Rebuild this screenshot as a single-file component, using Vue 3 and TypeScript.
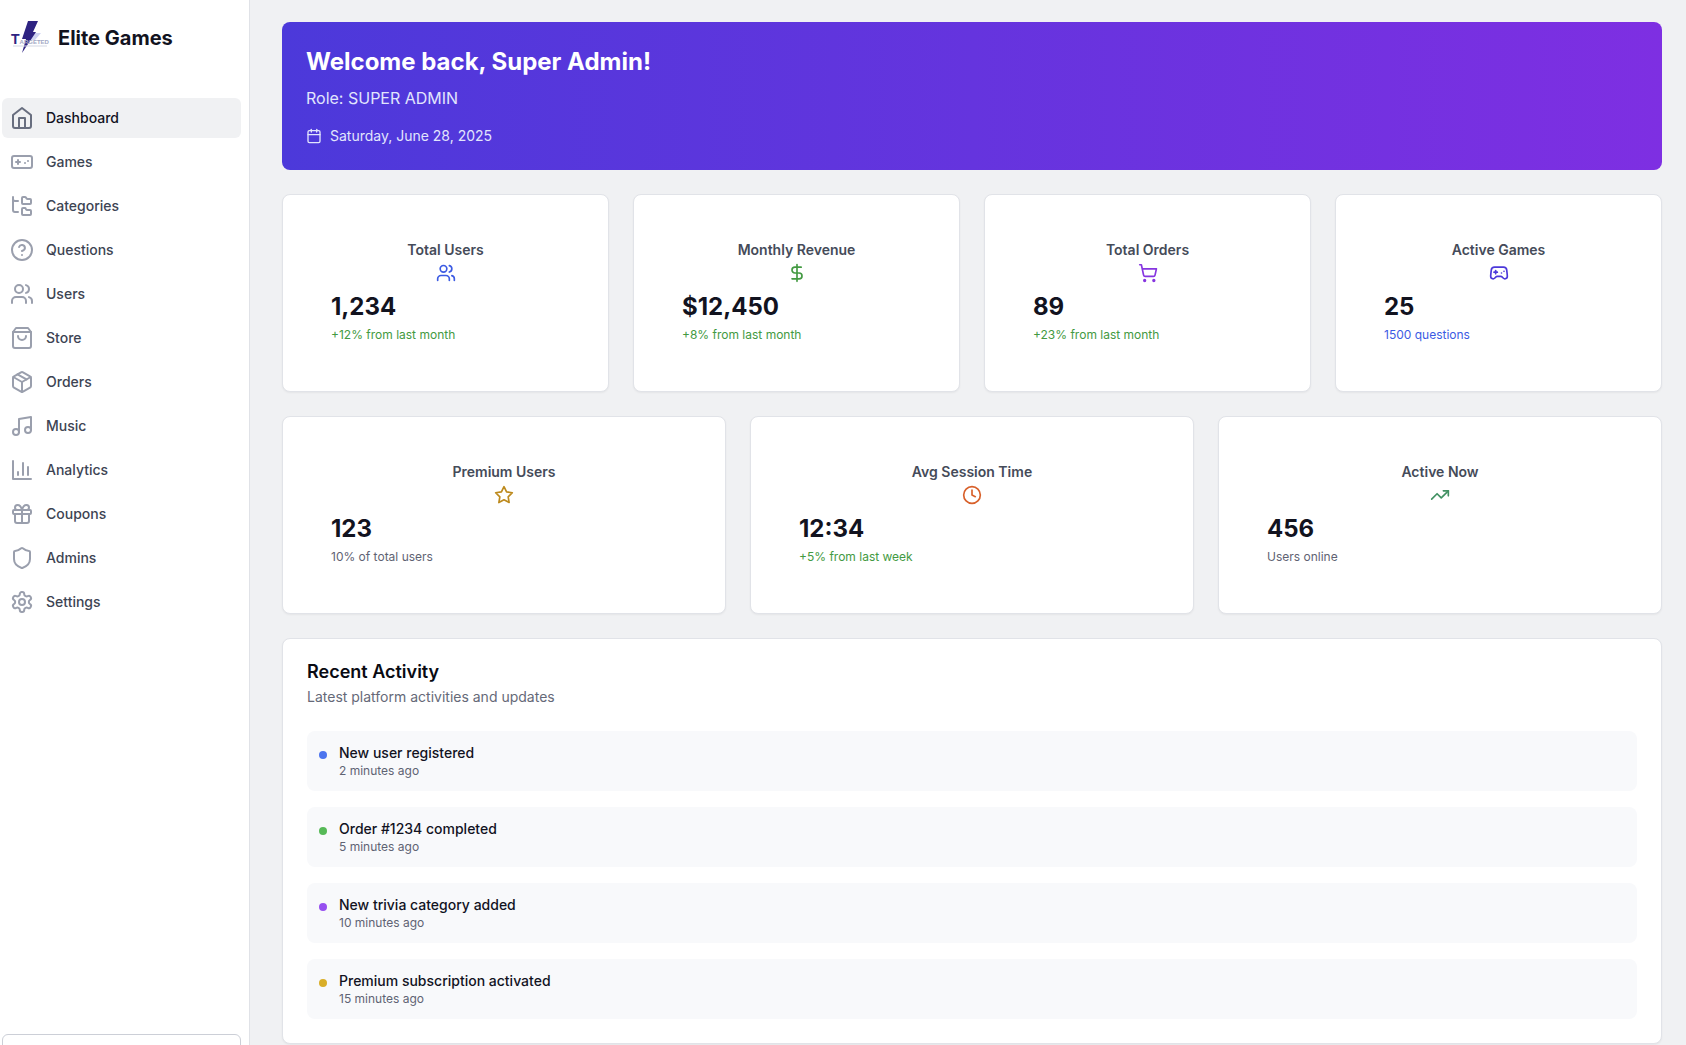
<script setup lang="ts">
interface NavItem {
  label: string
  icon: string
}

interface Stat {
  title: string
  icon: string
  iconTone: string
  value: string
  note: string
  noteTone: string
}

interface Activity {
  text: string
  time: string
  tone: string
}

const icons: Record<string, string[]> = {
  home: ['m3 9 9-7 9 7v11a2 2 0 0 1-2 2H5a2 2 0 0 1-2-2z', 'M9 22V12h6v10'],
  gamepad: [
    'M6 12h4',
    'M8 10v4',
    'M15 13h.01',
    'M18 11h.01',
    'M4 6h16a2 2 0 0 1 2 2v8a2 2 0 0 1-2 2H4a2 2 0 0 1-2-2V8a2 2 0 0 1 2-2z',
  ],
  folders: [
    'M20 10a1 1 0 0 0 1-1V6a1 1 0 0 0-1-1h-2.5a1 1 0 0 1-.8-.4l-.9-1.2A1 1 0 0 0 15 3h-2a1 1 0 0 0-1 1v5a1 1 0 0 0 1 1Z',
    'M20 21a1 1 0 0 0 1-1v-3a1 1 0 0 0-1-1h-2.9a1 1 0 0 1-.88-.55l-.42-.85a1 1 0 0 0-.92-.6H13a1 1 0 0 0-1 1v5a1 1 0 0 0 1 1Z',
    'M3 5a2 2 0 0 0 2 2h3',
    'M3 3v13a2 2 0 0 0 2 2h3',
  ],
  help: [
    'M22 12a10 10 0 1 1-20 0 10 10 0 0 1 20 0z',
    'M9.09 9a3 3 0 0 1 5.83 1c0 2-3 3-3 3',
    'M12 17h.01',
  ],
  users: [
    'M16 21v-2a4 4 0 0 0-4-4H6a4 4 0 0 0-4 4v2',
    'M13 7a4 4 0 1 1-8 0 4 4 0 0 1 8 0z',
    'M22 21v-2a4 4 0 0 0-3-3.87',
    'M16 3.13a4 4 0 0 1 0 7.75',
  ],
  bag: ['M6 2 3 6v14a2 2 0 0 0 2 2h14a2 2 0 0 0 2-2V6l-3-4Z', 'M3 6h18', 'M16 10a4 4 0 0 1-8 0'],
  box: [
    'm7.5 4.27 9 5.15',
    'M21 8a2 2 0 0 0-1-1.73l-7-4a2 2 0 0 0-2 0l-7 4A2 2 0 0 0 3 8v8a2 2 0 0 0 1 1.73l7 4a2 2 0 0 0 2 0l7-4A2 2 0 0 0 21 16Z',
    'm3.3 7 8.7 5 8.7-5',
    'M12 22V12',
  ],
  music: [
    'M9 18V5l12-2v13',
    'M9 18a3 3 0 1 1-6 0 3 3 0 0 1 6 0z',
    'M21 16a3 3 0 1 1-6 0 3 3 0 0 1 6 0z',
  ],
  chart: ['M3 3v18h18', 'M18 17V9', 'M13 17V5', 'M8 17v-3'],
  gift: [
    'M4 8h16a1 1 0 0 1 1 1v2a1 1 0 0 1-1 1H4a1 1 0 0 1-1-1V9a1 1 0 0 1 1-1z',
    'M12 8v13',
    'M19 12v7a2 2 0 0 1-2 2H7a2 2 0 0 1-2-2v-7',
    'M7.5 8a2.5 2.5 0 0 1 0-5A4.8 8 0 0 1 12 8a4.8 8 0 0 1 4.5-5 2.5 2.5 0 0 1 0 5',
  ],
  shield: [
    'M20 13c0 5-3.5 7.5-7.66 8.95a1 1 0 0 1-.67-.01C7.5 20.5 4 18 4 13V6a1 1 0 0 1 1-1c2 0 4.5-1.2 6.24-2.72a1.17 1.17 0 0 1 1.52 0C14.51 3.81 17 5 19 5a1 1 0 0 1 1 1z',
  ],
  settings: [
    'M12.22 2h-.44a2 2 0 0 0-2 2v.18a2 2 0 0 1-1 1.73l-.43.25a2 2 0 0 1-2 0l-.15-.08a2 2 0 0 0-2.73.73l-.22.38a2 2 0 0 0 .73 2.73l.15.1a2 2 0 0 1 1 1.72v.51a2 2 0 0 1-1 1.74l-.15.09a2 2 0 0 0-.73 2.73l.22.38a2 2 0 0 0 2.73.73l.15-.08a2 2 0 0 1 2 0l.43.25a2 2 0 0 1 1 1.73V20a2 2 0 0 0 2 2h.44a2 2 0 0 0 2-2v-.18a2 2 0 0 1 1-1.73l.43-.25a2 2 0 0 1 2 0l.15.08a2 2 0 0 0 2.73-.73l.22-.39a2 2 0 0 0-.73-2.73l-.15-.08a2 2 0 0 1-1-1.74v-.5a2 2 0 0 1 1-1.74l.15-.09a2 2 0 0 0 .73-2.73l-.22-.38a2 2 0 0 0-2.73-.73l-.15.08a2 2 0 0 1-2 0l-.43-.25a2 2 0 0 1-1-1.73V4a2 2 0 0 0-2-2z',
    'M15 12a3 3 0 1 1-6 0 3 3 0 0 1 6 0z',
  ],
  calendar: [
    'M8 2v4',
    'M16 2v4',
    'M5 4h14a2 2 0 0 1 2 2v14a2 2 0 0 1-2 2H5a2 2 0 0 1-2-2V6a2 2 0 0 1 2-2z',
    'M3 10h18',
  ],
  dollar: ['M12 2v20', 'M17 5H9.5a3.5 3.5 0 0 0 0 7h5a3.5 3.5 0 0 1 0 7H6'],
  cart: [
    'M9 21a1 1 0 1 1-2 0 1 1 0 0 1 2 0z',
    'M20 21a1 1 0 1 1-2 0 1 1 0 0 1 2 0z',
    'M2.05 2.05h2l2.66 12.42a2 2 0 0 0 2 1.58h9.78a2 2 0 0 0 1.95-1.57l1.65-7.43H5.12',
  ],
  controller: [
    'M6 11h4',
    'M8 9v4',
    'M15 12h.01',
    'M18 10h.01',
    'M17.32 5H6.68a4 4 0 0 0-3.978 3.59c-.006.052-.01.101-.017.152C2.604 9.416 2 14.456 2 16a3 3 0 0 0 3 3c1 0 1.5-.5 2-1l1.414-1.414A2 2 0 0 1 9.828 16h4.344a2 2 0 0 1 1.414.586L17 18c.5.5 1 1 2 1a3 3 0 0 0 3-3c0-1.545-.604-6.584-.685-7.258-.007-.05-.011-.1-.017-.151A4 4 0 0 0 17.32 5z',
  ],
  star: ['m12 2 3.09 6.26L22 9.27l-5 4.87 1.18 6.88L12 17.77l-6.18 3.25L7 14.14 2 9.27l6.91-1.01z'],
  clock: ['M22 12a10 10 0 1 1-20 0 10 10 0 0 1 20 0z', 'M12 6v6l4 2'],
  trend: ['m22 7-8.5 8.5-5-5L2 17', 'M16 7h6v6'],
}

const navItems: NavItem[] = [
  { label: 'Dashboard', icon: 'home' },
  { label: 'Games', icon: 'gamepad' },
  { label: 'Categories', icon: 'folders' },
  { label: 'Questions', icon: 'help' },
  { label: 'Users', icon: 'users' },
  { label: 'Store', icon: 'bag' },
  { label: 'Orders', icon: 'box' },
  { label: 'Music', icon: 'music' },
  { label: 'Analytics', icon: 'chart' },
  { label: 'Coupons', icon: 'gift' },
  { label: 'Admins', icon: 'shield' },
  { label: 'Settings', icon: 'settings' },
]

const statRows: { name: string; stats: Stat[] }[] = [
  {
    name: 'four',
    stats: [
      { title: 'Total Users', icon: 'users', iconTone: 'blue', value: '1,234', note: '+12% from last month', noteTone: 'green' },
      { title: 'Monthly Revenue', icon: 'dollar', iconTone: 'green', value: '$12,450', note: '+8% from last month', noteTone: 'green' },
      { title: 'Total Orders', icon: 'cart', iconTone: 'purple', value: '89', note: '+23% from last month', noteTone: 'green' },
      { title: 'Active Games', icon: 'controller', iconTone: 'indigo', value: '25', note: '1500 questions', noteTone: 'blue' },
    ],
  },
  {
    name: 'three',
    stats: [
      { title: 'Premium Users', icon: 'star', iconTone: 'yellow', value: '123', note: '10% of total users', noteTone: 'gray' },
      { title: 'Avg Session Time', icon: 'clock', iconTone: 'orange', value: '12:34', note: '+5% from last week', noteTone: 'green' },
      { title: 'Active Now', icon: 'trend', iconTone: 'emerald', value: '456', note: 'Users online', noteTone: 'gray' },
    ],
  },
]

const activities: Activity[] = [
  { text: 'New user registered', time: '2 minutes ago', tone: 'dot-blue' },
  { text: 'Order #1234 completed', time: '5 minutes ago', tone: 'dot-green' },
  { text: 'New trivia category added', time: '10 minutes ago', tone: 'dot-purple' },
  { text: 'Premium subscription activated', time: '15 minutes ago', tone: 'dot-yellow' },
]
</script>

<template>
  <div class="app">
    <aside class="sidebar">
      <div class="brand">
        <svg class="logo" viewBox="0 0 40 40" aria-hidden="true">
          <path d="M22 15h9l-6 7h-7z" fill="#cfd3f2" />
          <path d="M18 3h10l-5 11h3L12 35l4-14h-4z" fill="#2e2382" />
          <text x="1" y="26" class="logo-text"><tspan class="logo-initial">T</tspan><tspan class="logo-rest">ARGETED</tspan></text>
          <path d="M3 28h34" stroke="#d3d7e4" stroke-width="1" />
        </svg>
        <span class="brand-name">Elite Games</span>
      </div>
      <nav class="nav">
        <a
          v-for="(item, index) in navItems"
          :key="item.label"
          href="#"
          class="nav-link"
          :class="{ active: index === 0 }"
        >
          <svg class="icon nav-icon" viewBox="0 0 24 24" aria-hidden="true">
            <path v-for="d in icons[item.icon]" :key="d" :d="d" />
          </svg>
          <span>{{ item.label }}</span>
        </a>
      </nav>
      <div class="sidebar-footer">
        <button type="button" class="account" aria-label="Account"></button>
      </div>
    </aside>

    <main class="main">
      <section class="banner">
        <h1>Welcome back, Super Admin!</h1>
        <p class="role">Role: SUPER ADMIN</p>
        <div class="date">
          <svg class="icon date-icon" viewBox="0 0 24 24" aria-hidden="true">
            <path v-for="d in icons.calendar" :key="d" :d="d" />
          </svg>
          <span>Saturday, June 28, 2025</span>
        </div>
      </section>

      <section v-for="row in statRows" :key="row.name" class="stats" :class="row.name">
        <article v-for="stat in row.stats" :key="stat.title" class="card stat">
          <header class="stat-head">
            <h2>{{ stat.title }}</h2>
            <svg class="icon stat-icon" :class="stat.iconTone" viewBox="0 0 24 24" aria-hidden="true">
              <path v-for="d in icons[stat.icon]" :key="d" :d="d" />
            </svg>
          </header>
          <div class="value">{{ stat.value }}</div>
          <p class="note" :class="stat.noteTone">{{ stat.note }}</p>
        </article>
      </section>

      <section class="card recent">
        <h2>Recent Activity</h2>
        <p class="recent-sub">Latest platform activities and updates</p>
        <ul>
          <li v-for="entry in activities" :key="entry.text">
            <span class="dot" :class="entry.tone"></span>
            <div>
              <p class="entry-text">{{ entry.text }}</p>
              <p class="entry-time">{{ entry.time }}</p>
            </div>
          </li>
        </ul>
      </section>
    </main>
  </div>
</template>

<style>
body {
  background: #f0f1f3;
}
</style>

<style scoped>
* {
  box-sizing: border-box;
}

h1,
h2,
p,
ul {
  margin: 0;
  padding: 0;
}

.app {
  display: flex;
  min-height: 100vh;
  font-family: Inter, 'Liberation Sans', sans-serif;
  color: #12131f;
}

.icon {
  flex: none;
  fill: none;
  stroke: currentColor;
  stroke-width: 2;
  stroke-linecap: round;
  stroke-linejoin: round;
}

.sidebar {
  position: sticky;
  top: 0;
  display: flex;
  flex: none;
  flex-direction: column;
  width: 250px;
  height: 100vh;
  padding: 0 8px 0 2px;
  overflow: hidden;
  background: #fff;
  border-right: 1px solid #e0e2e7;
}

.brand {
  display: flex;
  align-items: center;
  gap: 8px;
  height: 76px;
  padding-left: 8px;
}

.logo {
  width: 40px;
  height: 40px;
}

.logo-text {
  font-family: 'Liberation Sans', sans-serif;
  font-weight: 700;
}

.logo-initial {
  font-size: 14px;
  fill: #2e2382;
}

.logo-rest {
  font-size: 6px;
  fill: #a2a8c4;
}

.brand-name {
  font-size: 20px;
  font-weight: 700;
  line-height: 28px;
}

.nav {
  display: flex;
  flex: 1;
  flex-direction: column;
  gap: 4px;
  padding-top: 22px;
}

.nav-link {
  display: flex;
  align-items: center;
  gap: 12px;
  height: 40px;
  padding: 0 8px;
  border-radius: 6px;
  font-size: 14px;
  font-weight: 500;
  line-height: 20px;
  color: #3d4453;
  text-decoration: none;
}

.nav-icon {
  width: 24px;
  height: 24px;
  color: #9a9fad;
}

.nav-link.active {
  background: #f0f1f3;
  color: #12131f;
}

.nav-link.active .nav-icon {
  color: #686e7f;
}

.sidebar-footer {
  flex: none;
  height: 11px;
}

.account {
  width: 100%;
  height: 48px;
  background: #fff;
  border: 1px solid #cccfd7;
  border-radius: 6px;
}

.main {
  display: flex;
  flex: 1;
  flex-direction: column;
  gap: 24px;
  min-width: 0;
  padding: 22px 24px 0 32px;
}

.banner {
  padding: 24px;
  border-radius: 8px;
  background: linear-gradient(to right, #4c39da, #7e2fe2);
  color: #fff;
}

.banner h1 {
  font-size: 24px;
  font-weight: 700;
  line-height: 32px;
}

.role {
  margin-top: 8px;
  font-size: 16px;
  line-height: 24px;
  color: #e1e5fd;
}

.date {
  display: flex;
  align-items: center;
  gap: 8px;
  margin-top: 16px;
  font-size: 14px;
  line-height: 20px;
  color: #e1e5fd;
}

.date-icon {
  width: 16px;
  height: 16px;
}

.stats {
  display: grid;
  gap: 24px;
}

.four {
  grid-template-columns: repeat(4, 1fr);
}

.three {
  grid-template-columns: repeat(3, 1fr);
}

.card {
  background: #fff;
  border: 1px solid #e1e3e8;
  border-radius: 8px;
  box-shadow: 0 1px 2px rgba(0, 0, 0, 0.05);
}

.stat {
  padding: 48px;
}

.stat-head {
  display: flex;
  flex-direction: column;
  align-items: center;
  gap: 6px;
  padding-bottom: 8px;
}

.stat-head h2 {
  font-size: 14px;
  font-weight: 600;
  line-height: 14px;
  color: #454b59;
}

.stat-icon {
  width: 20px;
  height: 20px;
}

.value {
  font-size: 24px;
  font-weight: 700;
  line-height: 32px;
}

.note {
  margin-top: 4px;
  font-size: 12px;
  line-height: 16px;
}

.blue {
  color: #3c5be3;
}

.green {
  color: #439a42;
}

.purple {
  color: #8635e0;
}

.indigo {
  color: #4c39da;
}

.yellow {
  color: #bd8a1d;
}

.orange {
  color: #d8602a;
}

.emerald {
  color: #429163;
}

.gray {
  color: #5f6373;
}

.recent {
  padding: 24px;
}

.recent h2 {
  font-size: 18px;
  font-weight: 600;
  line-height: 18px;
  color: #090a12;
}

.recent-sub {
  margin-top: 6px;
  font-size: 14px;
  line-height: 20px;
  color: #656978;
}

.recent ul {
  display: flex;
  flex-direction: column;
  gap: 16px;
  margin-top: 24px;
  list-style: none;
}

.recent li {
  display: flex;
  gap: 12px;
  padding: 12px;
  border-radius: 8px;
  background: #f8f9fb;
}

.dot {
  flex: none;
  width: 8px;
  height: 8px;
  margin-top: 8px;
  border-radius: 50%;
}

.dot-blue {
  background: #4c74ee;
}

.dot-green {
  background: #56b957;
}

.dot-purple {
  background: #964ff0;
}

.dot-yellow {
  background: #d9ae28;
}

.entry-text {
  font-size: 14px;
  font-weight: 500;
  line-height: 20px;
}

.entry-time {
  font-size: 12px;
  line-height: 16px;
  color: #5f6373;
}
</style>
